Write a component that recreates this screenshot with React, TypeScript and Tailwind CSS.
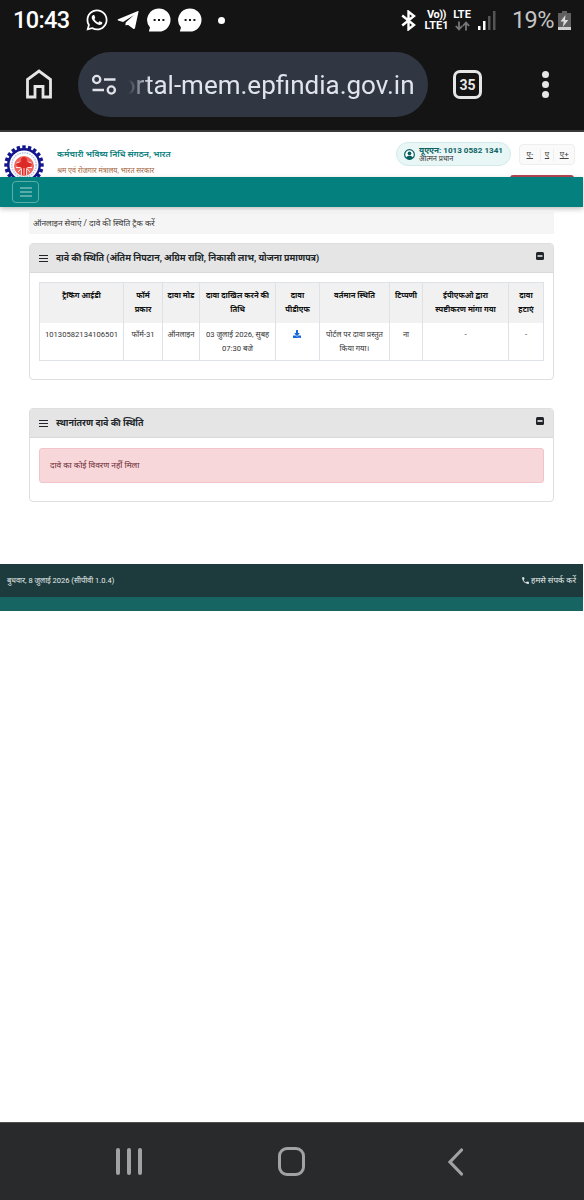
import type { ReactNode } from "react";
import { FaWhatsapp, FaDownload } from "react-icons/fa";
import { MdPhone } from "react-icons/md";

function Bubble({ className }: { className: string }) {
  return (
    <svg viewBox="0 0 24 24" className={`size-6 shrink-0 ${className}`}>
      <path d="M12 .5a11.5 11.5 0 1 1 0 23H2.6c-.6 0-.8-.6-.5-1l.9-3A11.5 11.5 0 0 1 12 .5Z" fill="#fff" />
      <g fill="#141414">
        <rect x="6.6" y="11" width="2" height="2" />
        <rect x="11" y="11" width="2" height="2" />
        <rect x="15.4" y="11" width="2" height="2" />
      </g>
    </svg>
  );
}

function StatusBar() {
  return (
    <div className="flex h-10 items-center overflow-hidden whitespace-nowrap text-white">
      <span className="ml-[13px] w-[57px] pt-[2px] text-[23.5px] font-medium tracking-[-0.6px]">10:43</span>
      <FaWhatsapp className="ml-[15px] size-[24px] shrink-0" />
      <svg viewBox="0 0 21 18" className="ml-2 h-[18px] w-[22px] shrink-0">
        <path d="M20.500 0 .6 8.300c-.7.3-.7 1 0 1.200L5.600 11 16.500 4 8.200 11.600l-.3 2.700 2.800-.2 5 3.600c.9.500 1.500.2 1.800-.8L21 .7c.1-.5-.1-.8-.5-.7Z" fill="#fff" />
      </svg>
      <Bubble className="ml-2" />
      <Bubble className="ml-[7px]" />
      <span className="ml-4 size-[7px] shrink-0 rounded-full bg-white" />
      <svg viewBox="0 0 15 21" className="ml-[176px] h-[21px] w-[15px] shrink-0" fill="none" stroke="#fff" strokeWidth="2.400">
        <path d="M1.200 5.500 13 15l-5.500 4.300V1.700L13 6 1.200 15.500" />
      </svg>
      <div className="ml-[8px] flex w-[25px] flex-col items-center text-[11px] leading-[11px] font-bold">
        <span className="tracking-[-0.5px]">Vo))</span>
        <span>LTE1</span>
      </div>
      <div className="ml-[3px] flex w-5 flex-col items-center">
        <span className="text-[11px] leading-[11px] font-bold">LTE</span>
        <svg viewBox="0 0 15 10" className="mt-px h-[10px] w-[15px]" fill="none" stroke="#777" strokeWidth="1.800">
          <path d="M4 .5v7.500M.8 5 4 8.400 7.200 5M11 9.500V2M7.800 5 11 1.600 14.200 5" />
        </svg>
      </div>
      <svg viewBox="0 0 18 19" className="ml-[6px] h-[19px] w-[18px] shrink-0">
        <rect x="0" y="15" width="2.500" height="4" fill="#fff" />
        <rect x="5" y="10" width="2.500" height="9" fill="#fff" />
        <rect x="10" y="5" width="2.500" height="14" fill="#555" />
        <rect x="15" y="0" width="2.500" height="19" fill="#555" />
      </svg>
      <span className="ml-[16px] w-[43px] pt-[2px] text-[23.5px] tracking-[-0.6px] text-[#c4c4c4]">19%</span>
      <svg viewBox="0 0 13 19" className="ml-[3px] h-[19px] w-[13px] shrink-0">
        <path d="M4 0h5v2h4v17H0V2h4Z" fill="#606060" />
        <path d="M0 16h13v3H0Z" fill="#d0d0d0" />
        <path d="M7.500 4 2.500 10.500h3.200L4.800 16l5.500-7H7Z" fill="#ddd" />
      </svg>
    </div>
  );
}

function BrowserBar() {
  return (
    <div className="flex h-[90px] items-start pt-3">
      <svg viewBox="0 0 26 30" className="mt-[17px] ml-[26px] h-[30px] w-[26px] shrink-0" fill="none" stroke="#e6e6e6" strokeWidth="2.800">
        <path d="M1.500 28V10.500L13 2l11.500 8.500V28H17V17.500H9V28Z" />
      </svg>
      <div className="ml-[26px] flex h-[65px] w-[350px] shrink-0 items-center rounded-full bg-[#303642]">
        <svg viewBox="0 0 24 22" className="ml-[14px] h-[22px] w-6 shrink-0" fill="none" stroke="#e0e2e8" strokeWidth="2.300">
          <circle cx="4.700" cy="5.500" r="3.600" />
          <path d="M12 5.500h11.500M.5 16H12" />
          <circle cx="19.300" cy="16" r="3.600" />
        </svg>
        <div className="flex w-[298.5px] justify-end pt-[2px] text-[26px] whitespace-nowrap text-[#e1e4ec] [mask-image:linear-gradient(to_right,transparent_12px,black_34px)]">
          ortal-mem.epfindia.gov.in
        </div>
      </div>
      <div className="mt-[18px] ml-[25px] flex size-[29px] shrink-0 items-center justify-center rounded-[7px] border-[3px] border-[#e6e6e6] pt-px text-[14px] font-bold text-[#e6e6e6]">
        35
      </div>
      <div className="mt-[19px] ml-[60px] flex flex-col gap-[3px]">
        <span className="size-[7px] rounded-full bg-[#e6e6e6]" />
        <span className="size-[7px] rounded-full bg-[#e6e6e6]" />
        <span className="size-[7px] rounded-full bg-[#e6e6e6]" />
      </div>
    </div>
  );
}

const teeth = Array.from({ length: 20 }, (_, i) => i * 18);

function Logo() {
  return (
    <svg viewBox="0 0 40 40" className="mt-[13px] ml-1 size-10 shrink-0">
      <g fill="#15158c">
        {teeth.map((a) => (
          <rect key={a} x="18.300" y="0.300" width="3.400" height="5" transform={`rotate(${a} 20 20)`} />
        ))}
      </g>
      <circle cx="20" cy="20" r="15.700" fill="#fff" stroke="#15158c" strokeWidth="2.400" />
      <circle cx="20" cy="20" r="12.200" fill="none" stroke="#b4c3e6" strokeWidth="1.600" strokeDasharray="1.500 1" />
      <circle cx="20" cy="21" r="10" fill="#f0655f" />
      <g fill="#dc2a26">
        <circle cx="20" cy="15" r="3" />
        <path d="M12 19c3-3 13-3 16 0l-2 3H14ZM17.500 21h5v9h-5Z" />
      </g>
      <g stroke="#fff" strokeWidth="0.800" fill="none">
        <path d="M12 22.500h4.500M23.500 22.500H28M14 27l3.500-4M26 27l-3.500-4M17.500 30v-6M22.500 30v-6M20 23v7M12.500 18l3-1M27.500 18l-3-1" />
      </g>
    </svg>
  );
}

function UserIcon() {
  return (
    <svg viewBox="0 0 12 12" className="ml-[7px] size-[11px] shrink-0">
      <circle cx="6" cy="6" r="5.300" fill="#fff" stroke="#075e5e" strokeWidth="1.300" />
      <circle cx="6" cy="4.700" r="2" fill="#075e5e" />
      <path d="M2.200 9.500C3 7.800 4.400 7.400 6 7.400s3 .4 3.800 2.100A5.300 5.300 0 0 1 6 11.300a5.300 5.300 0 0 1-3.800-1.800Z" fill="#075e5e" />
    </svg>
  );
}

function SiteHeader() {
  return (
    <header className="flex h-[45px] items-start overflow-hidden whitespace-nowrap">
      <Logo />
      <div className="ml-[13px] w-[339px] shrink-0 pt-[14px]">
        <div className="text-[8.550px] leading-[17px] font-semibold text-[#067d7c]">कर्मचारी भविष्य निधि संगठन, भारत</div>
        <div className="text-[7.150px] leading-[16px] text-[#a4643c]">श्रम एवं रोजगार मंत्रालय, भारत सरकार</div>
      </div>
      <div className="mt-[10px] flex h-6 w-[115px] shrink-0 items-center rounded-full border border-[#d3eaea] bg-[#e9f6f6]">
        <UserIcon />
        <div className="ml-[4px]">
          <div className="text-[8.100px] leading-[9px] font-bold text-[#0b6262]">यूएएन: 1013 0582 1341</div>
          <div className="text-[7.300px] leading-[8px] text-[#333]">आत्मन प्रधान</div>
        </div>
      </div>
      <div className="w-[73px] shrink-0">
        <div className="mt-3 ml-2 flex h-[21px] w-[56px] items-center rounded border border-[#eee] bg-[#fafafa] text-[8px] text-[#444]">
          <span className="w-5 text-center underline">ए-</span>
          <span className="w-[15px] border-x border-[#eee] text-center underline">ए</span>
          <span className="w-5 text-center underline">ए+</span>
        </div>
        <div className="mt-[10px] -ml-px h-3 w-[64px] rounded-[3px] bg-[#b34753]" />
      </div>
    </header>
  );
}

function Bars({ className }: { className: string }) {
  return (
    <svg viewBox="0 0 12 12" className={className} stroke="currentColor" strokeWidth="1.500">
      <path d="M0 2h12M0 6h12M0 10h12" />
    </svg>
  );
}

function Panel({ title, height, children }: { title: string; height: string; children: ReactNode }) {
  return (
    <section className={`ml-[29px] w-[525px] overflow-hidden rounded-[4px] border border-[#dedede] bg-white ${height}`}>
      <div className="flex h-[29px] items-center border-b border-[#d9d9d9] bg-[#e5e5e5] pl-[9px] whitespace-nowrap text-[#212529]">
        <Bars className="size-[9px]" />
        <h2 className="ml-[8px] w-[472px] pt-[2px] text-[8.930px] font-bold">{title}</h2>
        <svg viewBox="0 0 8 8" className="mt-[-5px] ml-[8px] size-2">
          <rect width="8" height="8" rx="1.500" fill="#212529" />
          <path d="M1.500 4h5" stroke="#fff" strokeWidth="1.400" />
        </svg>
      </div>
      {children}
    </section>
  );
}

const columns: { head: string[]; cell: ReactNode[] }[] = [
  { head: ["ट्रैकिंग आईडी"], cell: ["10130582134106501"] },
  { head: ["फॉर्म", "प्रकार"], cell: ["फॉर्म-31"] },
  { head: ["दावा मोड"], cell: ["ऑनलाइन"] },
  { head: ["दावा दाखिल करने की", "तिथि"], cell: ["03 जुलाई 2026, सुबह", "07:30 बजे"] },
  { head: ["दावा", "पीडीएफ"], cell: [<FaDownload key="d" className="mx-auto mt-[2px] -ml-px size-[8px] text-[#1668d8]" />] },
  { head: ["वर्तमान स्थिति"], cell: ["पोर्टल पर दावा प्रस्तुत", "किया गया।"] },
  { head: ["टिप्पणी"], cell: ["ना"] },
  { head: ["ईपीएफओ द्वारा", "स्पष्टीकरण मांगा गया"], cell: ["-"] },
  { head: ["दावा", "हटाएं"], cell: ["-"] },
];

function ClaimsTable() {
  return (
    <div className="mt-[9px] ml-[9px] grid w-[505px] grid-cols-[84px_39px_37px_76px_44px_70px_33px_86px_35px] grid-rows-[40px_38px] border-t border-l border-[#dee2e6] text-center whitespace-nowrap">
      {columns.map((c, i) => (
        <div key={`h${i}`} className="flex flex-col items-center border-r border-[#dee2e6] bg-[#f1f1f1] pt-[6px] text-[7.650px] leading-[14px] font-bold text-[#111]">
          {c.head.map((line) => (
            <div key={line}>{line}</div>
          ))}
        </div>
      ))}
      {columns.map((c, i) => (
        <div key={`c${i}`} className="flex flex-col items-center border-r border-b border-[#dee2e6] pt-[5px] text-[7.650px] leading-[13.500px] text-[#333]">
          {c.cell.map((line, j) => (
            <div key={j}>{line}</div>
          ))}
        </div>
      ))}
    </div>
  );
}

export default function App() {
  return (
    <div className="flex h-[1200px] w-[584px] flex-col overflow-hidden bg-white font-[Roboto,'Noto_Sans','Noto_Sans_Devanagari',sans-serif]">
      <div className="h-[132px] shrink-0 border-b-2 border-[#3a3a3c] bg-[#141414]">
        <StatusBar />
        <BrowserBar />
      </div>
      <SiteHeader />
      <nav className="relative flex h-[30px] w-[583px] shrink-0 bg-[#04817f] shadow-[0_2px_5px_rgba(0,0,0,0.25)]">
        <button className="mt-[4px] ml-3 flex h-[22px] w-[27px] items-center justify-center rounded-[4px] border border-[#5bacab] text-[#75b9b8]">
          <Bars className="h-3 w-3" />
        </button>
      </nav>
      <div className="mt-[5px] ml-[29px] flex h-[22px] w-[525px] shrink-0 items-center bg-[#f5f5f5] pl-1 text-[8.300px] whitespace-nowrap text-[#333]">
        ऑनलाइन सेवाएं / दावे की स्थिति ट्रैक करें
      </div>
      <main className="mt-[9px] h-[321px] shrink-0">
        <Panel title="दावे की स्थिति (अंतिम निपटान, अग्रिम राशि, निकासी लाभ, योजना प्रमाणपत्र)" height="h-[137px]">
          <ClaimsTable />
        </Panel>
        <div className="h-[28px]" />
        <Panel title="स्थानांतरण दावे की स्थिति" height="h-[94px]">
          <div className="mt-[10px] ml-[9px] flex h-[35px] w-[505px] items-center rounded-[3px] border border-[#f1c4ca] bg-[#f7d7da] pl-[10px] text-[8.300px] whitespace-nowrap text-[#6b2830]">
            दावे का कोई विवरण नहीं मिला
          </div>
        </Panel>
      </main>
      <footer className="h-[47px] w-[583px] shrink-0 bg-[#176563]">
        <div className="flex h-[33px] items-center justify-between bg-[#1d3b3c] px-[7px] text-[7.500px] whitespace-nowrap text-[#e8eeee]">
          <span>बुधवार, 8 जुलाई 2026 (सीपीवी 1.0.4)</span>
          <span className="flex items-center gap-px text-[8.200px]">
            <MdPhone className="size-[9px]" />
            हमसे संपर्क करें
          </span>
        </div>
      </footer>
      <div className="mt-auto flex h-[78px] shrink-0 items-center border-t border-[#505052] bg-[#292a2c]">
        <div className="ml-[116px] flex h-[27px] w-[26px] justify-between">
          <span className="w-1 rounded-full bg-[#a2a2a4]" />
          <span className="w-1 rounded-full bg-[#a2a2a4]" />
          <span className="w-1 rounded-full bg-[#a2a2a4]" />
        </div>
        <div className="ml-[136px] h-[29px] w-[27px] rounded-[9px] border-[3px] border-[#a2a2a4]" />
        <svg viewBox="0 0 16 28" className="ml-[142px] h-7 w-4" fill="none" stroke="#a2a2a4" strokeWidth="3.200" strokeLinecap="round">
          <path d="M14.500 2 3 14l11.500 12" />
        </svg>
      </div>
    </div>
  );
}
